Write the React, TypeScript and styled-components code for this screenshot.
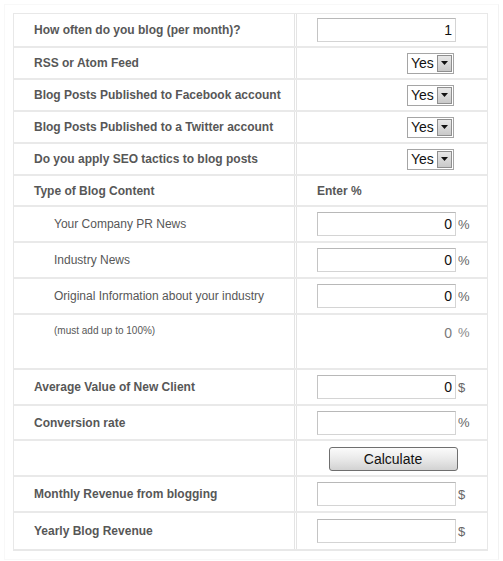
import * as React from "react";
import styled, { createGlobalStyle } from "styled-components";

const GlobalStyle = createGlobalStyle`
  body {
    margin: 0;
    background: #fff;
    font-family: "Liberation Sans", Arial, sans-serif;
  }
`;

const Frame = styled.div`
  margin: 4px;
  padding: 8px;
  width: 477px;
  border: 1px solid #f8f8f8;
  border-right-color: #f2f2f2;
`;

const Table = styled.div`
  width: 475px;
  border: 1px solid #e8e8e8;
  border-bottom-width: 2px;
  box-sizing: border-box;
`;

const Row = styled.div<{ $h: number; $top?: boolean }>`
  display: grid;
  grid-template-columns: 283px 1fr;
  height: ${(p) => p.$h}px;
  box-sizing: border-box;
  border-bottom: 2px solid #e9e9e9;

  &:last-child {
    border-bottom: none;
  }
`;

const LabelCell = styled.div<{ $sub?: boolean; $small?: boolean; $top?: boolean }>`
  height: 100%;
  box-sizing: border-box;
  display: flex;
  align-items: ${(p) => (p.$top ? "flex-start" : "center")};
  padding-left: ${(p) => (p.$sub ? 40 : 20)}px;
  padding-top: ${(p) => (p.$top ? 10 : 0)}px;
  border-right: 3px double #e4e4e4;
  color: #575757;
  font-size: ${(p) => (p.$small ? 10 : 12)}px;
  font-weight: ${(p) => (p.$sub ? "normal" : "bold")};
`;

const ValueCell = styled.div<{ $center?: boolean; $top?: boolean }>`
  height: 100%;
  box-sizing: border-box;
  display: flex;
  align-items: ${(p) => (p.$top ? "flex-start" : "center")};
  justify-content: ${(p) => (p.$center ? "center" : "flex-start")};
  padding-left: ${(p) => (p.$center ? 0 : 20)}px;
  padding-top: ${(p) => (p.$top ? 10 : 0)}px;
`;

const Control = styled.div`
  width: 139px;
  display: flex;
  justify-content: flex-end;
`;

const TextInput = styled.input`
  width: 139px;
  height: 24px;
  box-sizing: border-box;
  border: 1px solid #d4d4d4;
  border-top-color: #b8b8b8;
  border-left-color: #c4c4c4;
  padding: 0 3px;
  text-align: right;
  font-family: "Liberation Sans", Arial, sans-serif;
  font-size: 14px;
  color: #111;
  outline: none;
`;

const Suffix = styled.span<{ $muted?: boolean }>`
  margin-left: 2px;
  font-size: 13px;
  color: ${(p) => (p.$muted ? "#8a8a8a" : "#666")};
`;

const Total = styled.span`
  padding-right: 4px;
  font-size: 14px;
  color: #7a7a7a;
`;

const SelectBox = styled.div`
  display: inline-flex;
  align-items: center;
  height: 21px;
  width: 47px;
  box-sizing: border-box;
  border: 1px solid #a5a5a5;
  background: #fff;
  margin-right: 2px;
`;

const SelectText = styled.span`
  flex: 1;
  padding-left: 3px;
  font-size: 14px;
  color: #111;
`;

const ArrowBox = styled.span`
  width: 15px;
  height: 17px;
  margin-right: 1px;
  box-sizing: border-box;
  border: 1px solid #8f8f8f;
  background: linear-gradient(#e8e8e8, #c9c9c9);
  display: flex;
  align-items: center;
  justify-content: center;
`;

const HeadText = styled.span`
  font-size: 12px;
  font-weight: bold;
  color: #575757;
`;

const Button = styled.button`
  width: 129px;
  height: 24px;
  margin-left: 2px;
  margin-top: 1px;
  border: 1px solid #6f6f6f;
  border-radius: 3px;
  background: linear-gradient(#fbfbfb, #e9e9e9 50%, #d2d2d2);
  font-family: "Liberation Sans", Arial, sans-serif;
  font-size: 14px;
  color: #111;
  padding: 0;
`;

const Select = () => (
  <Control>
    <SelectBox>
      <SelectText>Yes</SelectText>
      <ArrowBox>
        <svg width="7" height="4" viewBox="0 0 7 4">
          <path d="M0 0h7L3.5 4z" fill="#111" />
        </svg>
      </ArrowBox>
    </SelectBox>
  </Control>
);

const Field = ({ value, unit }: { value?: string; unit?: string }) => (
  <>
    <Control>
      <TextInput defaultValue={value ?? ""} />
    </Control>
    {unit && <Suffix>{unit}</Suffix>}
  </>
);

export default function App() {
  return (
    <>
      <GlobalStyle />
      <Frame>
        <Table>
          <Row $h={34}>
            <LabelCell>How often do you blog (per month)?</LabelCell>
            <ValueCell>
              <Field value="1" />
            </ValueCell>
          </Row>
          <Row $h={32}>
            <LabelCell>RSS or Atom Feed</LabelCell>
            <ValueCell>
              <Select />
            </ValueCell>
          </Row>
          <Row $h={32}>
            <LabelCell>Blog Posts Published to Facebook account</LabelCell>
            <ValueCell>
              <Select />
            </ValueCell>
          </Row>
          <Row $h={32}>
            <LabelCell>Blog Posts Published to a Twitter account</LabelCell>
            <ValueCell>
              <Select />
            </ValueCell>
          </Row>
          <Row $h={32}>
            <LabelCell>Do you apply SEO tactics to blog posts</LabelCell>
            <ValueCell>
              <Select />
            </ValueCell>
          </Row>
          <Row $h={31}>
            <LabelCell>Type of Blog Content</LabelCell>
            <ValueCell>
              <HeadText>Enter %</HeadText>
            </ValueCell>
          </Row>
          <Row $h={36}>
            <LabelCell $sub>Your Company PR News</LabelCell>
            <ValueCell>
              <Field value="0" unit="%" />
            </ValueCell>
          </Row>
          <Row $h={36}>
            <LabelCell $sub>Industry News</LabelCell>
            <ValueCell>
              <Field value="0" unit="%" />
            </ValueCell>
          </Row>
          <Row $h={36}>
            <LabelCell $sub>Original Information about your industry</LabelCell>
            <ValueCell>
              <Field value="0" unit="%" />
            </ValueCell>
          </Row>
          <Row $h={55}>
            <LabelCell $sub $small $top>
              (must add up to 100%)
            </LabelCell>
            <ValueCell $top>
              <Control>
                <Total>0</Total>
              </Control>
              <Suffix $muted>%</Suffix>
            </ValueCell>
          </Row>
          <Row $h={36}>
            <LabelCell>Average Value of New Client</LabelCell>
            <ValueCell>
              <Field value="0" unit="$" />
            </ValueCell>
          </Row>
          <Row $h={35}>
            <LabelCell>Conversion rate</LabelCell>
            <ValueCell>
              <Field unit="%" />
            </ValueCell>
          </Row>
          <Row $h={36}>
            <LabelCell />
            <ValueCell $center>
              <Button>Calculate</Button>
            </ValueCell>
          </Row>
          <Row $h={36}>
            <LabelCell>Monthly Revenue from blogging</LabelCell>
            <ValueCell>
              <Field unit="$" />
            </ValueCell>
          </Row>
          <Row $h={36}>
            <LabelCell>Yearly Blog Revenue</LabelCell>
            <ValueCell>
              <Field unit="$" />
            </ValueCell>
          </Row>
        </Table>
      </Frame>
    </>
  );
}
